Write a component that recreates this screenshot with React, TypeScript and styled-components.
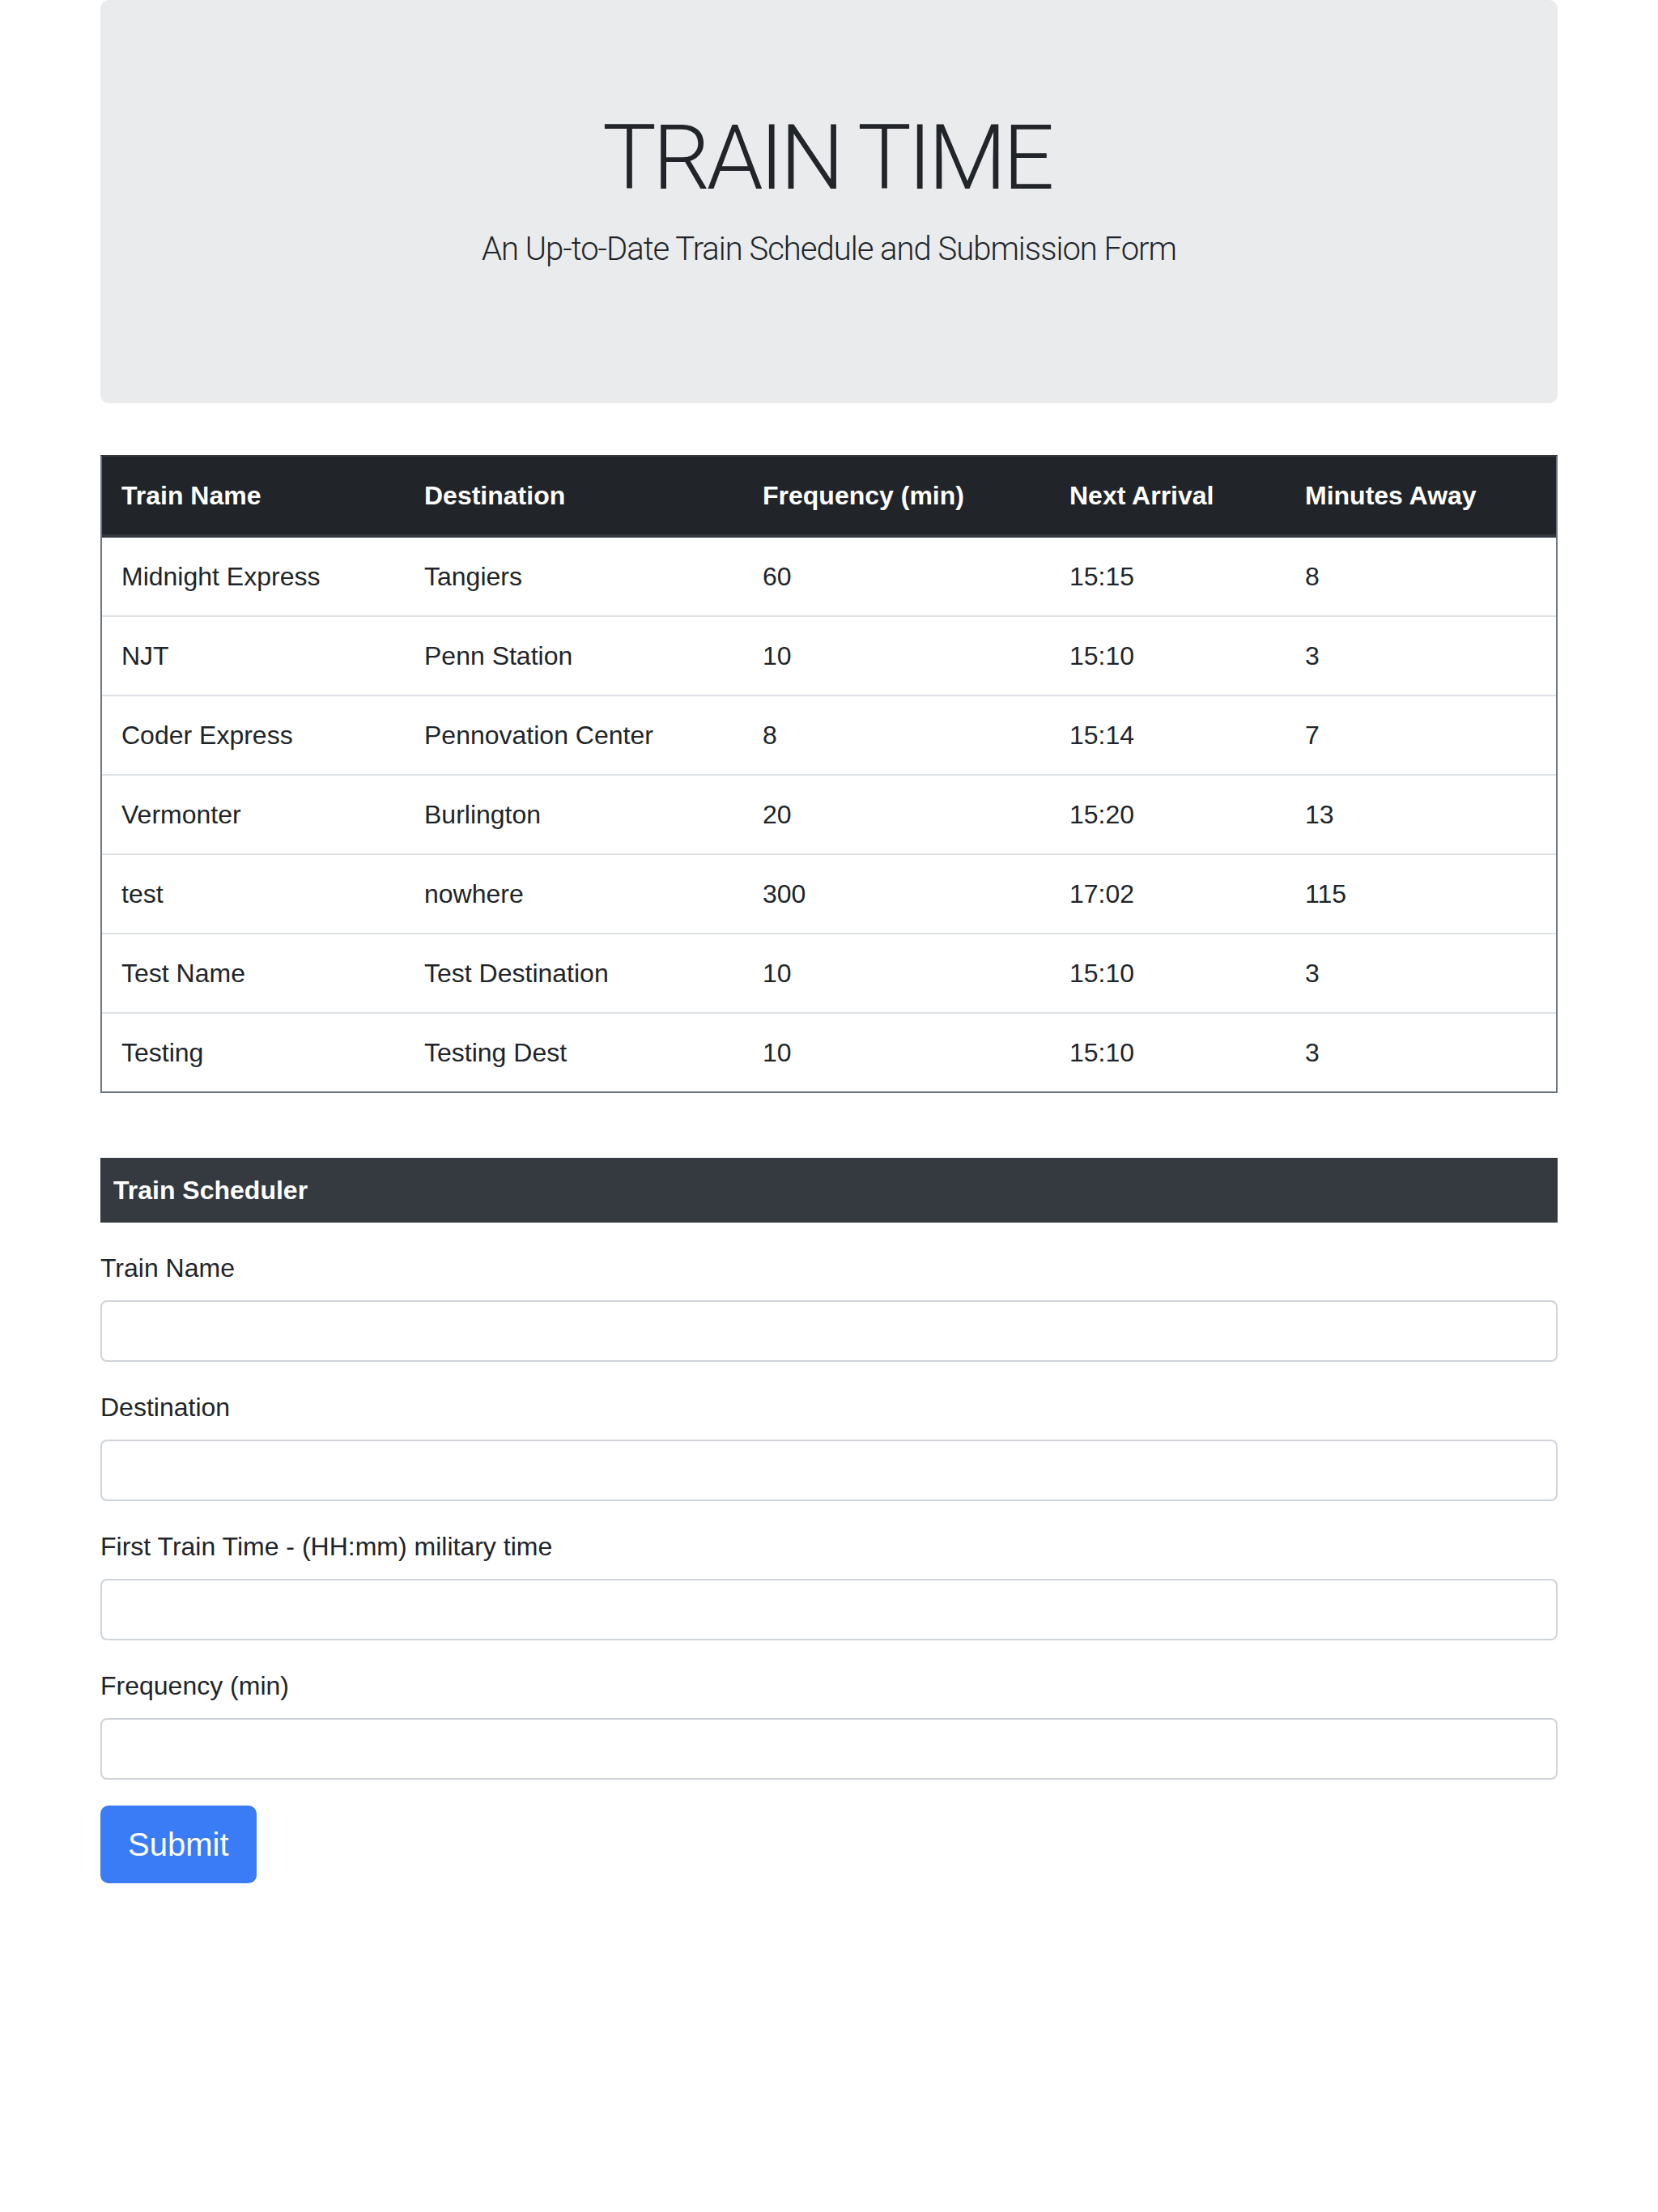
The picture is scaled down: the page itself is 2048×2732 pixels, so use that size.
import React from "react";
import styled, { createGlobalStyle } from "styled-components";

const GlobalStyle = createGlobalStyle`
  html, body {
    margin: 0;
    padding: 0;
    background: #ffffff;
  }
  body {
    font-family: "Liberation Sans", Arial, sans-serif;
    font-size: 32px;
    line-height: 1.5;
    color: #212529;
  }
  *, *::before, *::after { box-sizing: border-box; }
`;

const Container = styled.div`
  width: 1800px;
  margin: 0 auto;
  display: flex;
  flex-direction: column;
`;

const Jumbotron = styled.header`
  background: #eaebed;
  border-radius: 10px;
  padding: 128px 64px;
  margin-bottom: 64px;
  display: flex;
  flex-direction: column;
  align-items: center;
  text-align: center;
`;

const Title = styled.h1`
  margin: 0 0 16px;
  padding-right: 6px;
  font-family: Roboto, "Liberation Sans", sans-serif;
  font-weight: 300;
  font-size: 112px;
  line-height: 1.2;
  letter-spacing: -4.6px;
  color: #212529;
`;

const Lead = styled.p`
  margin: 0 0 32px;
  font-family: Roboto, "Liberation Sans", sans-serif;
  font-weight: 300;
  font-size: 40px;
  line-height: 1.5;
  letter-spacing: -1px;
`;

const Table = styled.table`
  width: 1800px;
  table-layout: fixed;
  border-collapse: separate;
  border-spacing: 0;
  border: 2px solid #6c757d;
  border-top-color: #343a40;
  margin-bottom: 80px;
`;

const HeadCell = styled.th`
  background: #212529;
  color: #ffffff;
  font-weight: 700;
  text-align: left;
  padding: 24px;
  line-height: 48px;
  border-bottom: 4px solid #33393e;
`;

const Row = styled.tr`
  & + & > td {
    border-top: 2px solid #dee2e6;
  }
`;

const Cell = styled.td`
  padding: 24px;
  line-height: 48px;
  color: #212529;
`;

const SchedulerBar = styled.div`
  background: #343a40;
  color: #ffffff;
  font-weight: 700;
  padding: 16px;
  line-height: 48px;
  margin-bottom: 32px;
`;

const Form = styled.form`
  display: flex;
  flex-direction: column;
  align-items: flex-start;
`;

const Group = styled.div`
  display: flex;
  flex-direction: column;
  width: 100%;
  margin-bottom: 32px;
`;

const Label = styled.label`
  line-height: 48px;
  margin-bottom: 16px;
`;

const Input = styled.input`
  height: 76px;
  width: 100%;
  padding: 12px 24px;
  font: inherit;
  color: #495057;
  background: #ffffff;
  border: 2px solid #ced4da;
  border-radius: 8px;
  outline: none;
`;

const SubmitButton = styled.button`
  font-family: "Liberation Sans", Arial, sans-serif;
  font-size: 40px;
  line-height: 60px;
  padding: 16px 32px;
  color: #ffffff;
  background: #3a7cf5;
  border: 2px solid #3a7cf5;
  border-radius: 10px;
  cursor: pointer;
`;

const columns = [
  { label: "Train Name", width: 374 },
  { label: "Destination", width: 418 },
  { label: "Frequency (min)", width: 379 },
  { label: "Next Arrival", width: 291 },
  { label: "Minutes Away", width: 334 },
];

const trains = [
  ["Midnight Express", "Tangiers", "60", "15:15", "8"],
  ["NJT", "Penn Station", "10", "15:10", "3"],
  ["Coder Express", "Pennovation Center", "8", "15:14", "7"],
  ["Vermonter", "Burlington", "20", "15:20", "13"],
  ["test", "nowhere", "300", "17:02", "115"],
  ["Test Name", "Test Destination", "10", "15:10", "3"],
  ["Testing", "Testing Dest", "10", "15:10", "3"],
];

const fields = [
  { id: "train-name", label: "Train Name" },
  { id: "destination", label: "Destination" },
  { id: "first-train", label: "First Train Time - (HH:mm) military time" },
  { id: "frequency", label: "Frequency (min)" },
];

export default function App() {
  return (
    <>
      <GlobalStyle />
      <Container>
        <Jumbotron>
          <Title>TRAIN TIME</Title>
          <Lead>An Up-to-Date Train Schedule and Submission Form</Lead>
        </Jumbotron>

        <Table>
          <colgroup>
            {columns.map((c) => (
              <col key={c.label} style={{ width: c.width }} />
            ))}
          </colgroup>
          <thead>
            <tr>
              {columns.map((c) => (
                <HeadCell key={c.label}>{c.label}</HeadCell>
              ))}
            </tr>
          </thead>
          <tbody>
            {trains.map((t, i) => (
              <Row key={i}>
                {t.map((v, j) => (
                  <Cell key={j}>{v}</Cell>
                ))}
              </Row>
            ))}
          </tbody>
        </Table>

        <SchedulerBar>Train Scheduler</SchedulerBar>
        <Form onSubmit={(e) => e.preventDefault()}>
          {fields.map((f) => (
            <Group key={f.id}>
              <Label htmlFor={f.id}>{f.label}</Label>
              <Input id={f.id} type="text" />
            </Group>
          ))}
          <SubmitButton type="submit">Submit</SubmitButton>
        </Form>
      </Container>
    </>
  );
}
